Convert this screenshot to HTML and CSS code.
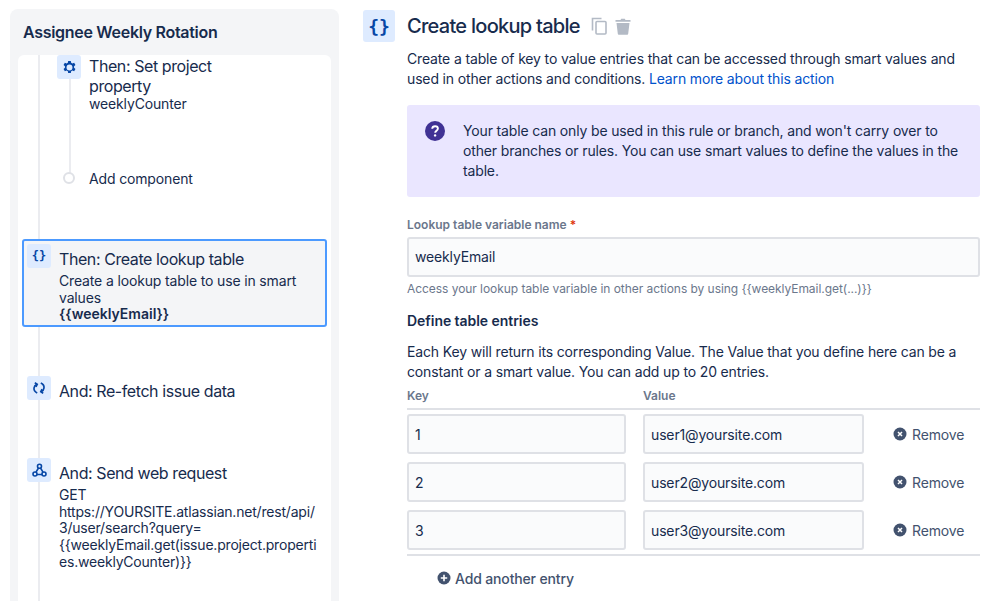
FILE: index.html
```html
<!DOCTYPE html>
<html lang="en">
<head>
<meta charset="utf-8">
<title>Create lookup table</title>
<link rel="stylesheet" href="styles.css">
</head>
<body>
<div class="page">
  <aside class="side">
    <h2 class="rule-name">Assignee Weekly Rotation</h2>
    <div class="chain">
      <div class="trunk"></div>
      <div class="branch">
        <div class="branch-line"></div>
        <div class="step step-branch">
          <span class="tile"><svg width="13" height="13" viewBox="0 0 14 14"><path fill="#0747a6" fill-rule="evenodd" d="M5.6 0h2.8l.4 2 1.3.7 1.9-.7 1.4 2.4-1.5 1.3v1.6l1.500 1.300-1.400 2.400-1.900-.7-1.300.7-.4 2H5.600l-.4-2-1.300-.7-1.900.7L.6 8.600l1.500-1.300V5.700L.6 4.400 2 2l1.900.7L5.200 2zM7 3.800a3.200 3.200 0 1 0 0 6.400 3.200 3.200 0 0 0 0-6.400z"/></svg></span>
          <div class="step-text narrow">
            <div class="step-title">Then: Set project property</div>
            <div class="step-desc">weeklyCounter</div>
          </div>
        </div>
        <div class="step add-step">
          <span class="dot-wrap"><span class="dot"></span></span>
          <div class="add-label">Add component</div>
        </div>
      </div>
      <div class="step step-main selected">
        <span class="tile"><span class="braces">{}</span></span>
        <div class="step-text">
          <div class="step-title">Then: Create lookup table</div>
          <div class="step-desc">Create a lookup table to use in smart values<br><b>{{weeklyEmail}}</b></div>
        </div>
      </div>
      <div class="step step-main refetch">
        <span class="tile"><svg width="14" height="14" viewBox="0 0 14 14" fill="none" stroke="#0747a6" stroke-width="1.700"><path d="M5.200 12C3 11 1.800 9.300 2 7.200 2.200 5.400 3.200 4 4.800 3.400"/><path d="M8.800 2C11 3 12.200 4.700 12 6.800c-.2 1.800-1.200 3.200-2.800 3.800"/><path d="M2.800 1.800l2.400 1.500-1.300 2.500M11.200 12.200l-2.400-1.500 1.300-2.500"/></svg></span>
        <div class="step-text"><div class="step-title">And: Re-fetch issue data</div></div>
      </div>
      <div class="step step-main web">
        <span class="tile"><svg width="15" height="15" viewBox="0 0 15 15" fill="none" stroke="#0747a6" stroke-width="1.600"><circle cx="7.500" cy="3.200" r="2"/><circle cx="3" cy="11" r="2"/><circle cx="12" cy="11" r="2"/><path d="M6.500 5l-2.500 4.200M8.500 5l2.500 4.200M5 11.500h5"/></svg></span>
        <div class="step-text">
          <div class="step-title">And: Send web request</div>
          <div class="step-desc url">GET<br>https://YOURSITE.atlassian.net/rest/api/<br>3/user/search?query=<br>{{weeklyEmail.get(issue.project.properti<br>es.weeklyCounter)}}</div>
        </div>
      </div>
    </div>
  </aside>
  <main class="main">
    <header class="head">
      <span class="head-tile">{}</span>
      <h1 class="title">Create lookup table</h1>
      <svg class="head-icon" width="17" height="18" viewBox="0 0 17 18" fill="none" stroke="#b3bac5" stroke-width="1.600"><path d="M1.500 13.500V1.500h9"/><rect x="5" y="4.500" width="10" height="12.500" rx="1"/></svg>
      <svg class="head-icon" width="16" height="18" viewBox="0 0 16 18"><path fill="#b3bac5" d="M.500 3h5l.7-1.200h3.600l.7 1.200h5v1.800H.500zM1.500 6h13l-1.300 10.800a1 1 0 0 1-1 .9H3.800a1 1 0 0 1-1-.9z"/></svg>
    </header>
    <div class="content">
      <p class="intro">Create a table of key to value entries that can be accessed through smart values and used in other actions and conditions. <a href="#">Learn more about this action</a></p>
      <div class="notice">
        <svg class="notice-icon" width="20" height="20" viewBox="0 0 20 20"><circle cx="10" cy="10" r="10" fill="#403294"/><path d="M7.200 7.800C7.300 6.200 8.500 5.200 10.100 5.200c1.600 0 2.800 1 2.800 2.400 0 2.200-2.700 2.200-2.700 4.200" fill="none" stroke="#fff" stroke-width="1.900"/><circle cx="10.100" cy="14.400" r="1.200" fill="#fff"/></svg>
        <p>Your table can only be used in this rule or branch, and won't carry over to other branches or rules. You can use smart values to define the values in the table.</p>
      </div>
      <label class="field-label var-label">Lookup table variable name<span class="req">*</span></label>
      <div class="input var-input">weeklyEmail</div>
      <p class="help">Access your lookup table variable in other actions by using {{weeklyEmail.get(...)}}</p>
      <h3 class="section">Define table entries</h3>
      <p class="section-text">Each Key will return its corresponding Value. The Value that you define here can be a constant or a smart value. You can add up to 20 entries.</p>
      <div class="table">
        <div class="row header-row">
          <span class="field-label c-key">Key</span>
          <span class="field-label c-val">Value</span>
        </div>
        <div class="rows">
          <div class="row">
            <div class="input c-key">1</div>
            <div class="input c-val">user1@yoursite.com</div>
            <span class="remove"><svg width="14" height="14" viewBox="0 0 14 14"><circle cx="7" cy="7" r="6.500" fill="#42526e"/><path d="M5 5l4 4M9 5l-4 4" stroke="#fff" stroke-width="1.500"/></svg>Remove</span>
          </div>
          <div class="row">
            <div class="input c-key">2</div>
            <div class="input c-val">user2@yoursite.com</div>
            <span class="remove"><svg width="14" height="14" viewBox="0 0 14 14"><circle cx="7" cy="7" r="6.500" fill="#42526e"/><path d="M5 5l4 4M9 5l-4 4" stroke="#fff" stroke-width="1.500"/></svg>Remove</span>
          </div>
          <div class="row">
            <div class="input c-key">3</div>
            <div class="input c-val">user3@yoursite.com</div>
            <span class="remove"><svg width="14" height="14" viewBox="0 0 14 14"><circle cx="7" cy="7" r="6.500" fill="#42526e"/><path d="M5 5l4 4M9 5l-4 4" stroke="#fff" stroke-width="1.500"/></svg>Remove</span>
          </div>
        </div>
      </div>
      <div class="add-entry"><svg width="14" height="14" viewBox="0 0 14 14"><circle cx="7" cy="7" r="6.500" fill="#42526e"/><path d="M7 3.800v6.400M3.800 7h6.400" stroke="#fff" stroke-width="1.600"/></svg>Add another entry</div>
    </div>
  </main>
</div>
</body>
</html>
```
FILE: styles.css
```css
* { box-sizing: border-box; }
html, body { margin: 0; height: 100%; overflow: hidden; background: #fff; }
body { font-family: Inter, "Liberation Sans", sans-serif; color: #172b4d; font-size: 14px; line-height: 17px; letter-spacing: -0.15px; }
p, h1, h2, h3 { margin: 0; }

.page { display: flex; height: 601px; overflow: hidden; }

.side { width: 329px; margin: 9px 0 0 10px; background: #f4f5f7; border-radius: 8px 8px 0 0; padding: 0 8px; display: flex; flex-direction: column; flex: none; }
.rule-name { font-size: 16px; line-height: 20px; font-weight: 600; color: #172b4d; padding: 13px 0 13px 5px; letter-spacing: -0.3px; }
.chain { position: relative; flex: 1; background: #fff; border-radius: 6px 6px 0 0; padding: 0 4px; overflow: hidden; }
.trunk { position: absolute; left: 19.500px; top: 0; bottom: 0; width: 2px; background: #ebecf0; }

.step { display: flex; position: relative; }
.tile { flex: none; width: 24px; height: 24px; border-radius: 3px; background: #deebff; display: flex; align-items: center; justify-content: center; }
.braces { font-family: "DejaVu Sans Mono", monospace; font-size: 12px; font-weight: 700; color: #0747a6; letter-spacing: 0; line-height: 1; }
.step-title { font-size: 16px; line-height: 20px; color: #172b4d; letter-spacing: -0.42px; }
.step-desc { font-size: 14px; line-height: 16.500px; margin-top: 2px; color: #172b4d; }
.step-desc b { font-weight: 600; letter-spacing: 0; }
.step-text { margin-left: 8px; min-width: 0; flex: 1; }
.narrow { max-width: 150px; }

.branch { position: relative; padding-left: 35px; height: 172px; }
.branch-line { position: absolute; left: 46.500px; top: 20px; height: 98px; width: 2px; background: #ebecf0; }
.step-branch { height: 108px; }
.step-branch .step-text { padding-top: 1px; }
.step-branch .step-desc { margin-top: 0; }
.add-step { align-items: center; height: 30px; }
.dot-wrap { width: 24px; display: flex; justify-content: center; }
.dot { width: 12px; height: 12px; border-radius: 50%; border: 2px solid #dfe1e6; background: #fff; }
.add-label { margin-left: 8px; font-size: 14px; }

.step-main { padding: 5px 4px 0 5px; margin-top: 0; }
.selected { width: 305px; height: 88px; margin-top: 12px; border: 2px solid #4c9aff; border-radius: 3px; background: #f4f5f7; padding: 3px 4px 0 3px; z-index: 1; }
.selected .step-title { margin-top: 5px; }
.selected .step-desc { margin-top: 4px; }
.refetch { margin-top: 44px; height: 30px; }
.refetch .step-text { padding-top: 5px; }
.web { margin-top: 52px; }
.web .step-text { padding-top: 5px; }
.web .step-desc { margin-top: 4px; line-height: 16.700px; letter-spacing: -0.2px; white-space: nowrap; }

.main { flex: 1; min-width: 0; padding: 10px 18px 0 24px; }
.head { display: flex; align-items: center; height: 32px; }
.head-tile { width: 32px; height: 32px; border-radius: 3px; background: #deebff; color: #0747a6; font-family: "DejaVu Sans Mono", monospace; font-weight: 700; font-size: 18px; letter-spacing: 0; display: flex; align-items: center; justify-content: center; margin-right: 12px; }
.title { font-size: 20px; line-height: 24px; font-weight: 500; color: #172b4d; margin-right: 11px; letter-spacing: -0.72px; }
.head-icon { margin-right: 7px; }
.content { padding-left: 44px; }
.intro { margin-top: 7px; font-size: 14px; line-height: 20px; }
.intro a { color: #0052cc; text-decoration: none; }
.notice { margin-top: 16px; background: #eae6ff; border-radius: 3px; height: 92px; padding: 16px 16px 0 18px; display: flex; gap: 18px; }
.notice-icon { flex: none; }
.notice p { line-height: 20px; }
.field-label { font-size: 12px; line-height: 16px; font-weight: 600; color: #6b778c; letter-spacing: 0; }
.var-label { display: block; margin-top: 20px; }
.req { color: #de350b; margin-left: 3px; }
.input { background: #fafbfc; border: 2px solid #dfe1e6; border-radius: 3px; height: 40px; display: flex; align-items: center; padding: 0 6px; font-size: 14px; color: #172b4d; }
.var-input { margin-top: 4px; padding-bottom: 2px; }
.help { margin-top: 4px; font-size: 12px; line-height: 16px; color: #6b778c; letter-spacing: -0.05px; }
.section { margin-top: 15px; font-size: 14px; line-height: 18px; font-weight: 600; letter-spacing: -0.05px; }
.section-text { margin-top: 12px; line-height: 20px; }

.table { margin-top: 6px; }
.rows { border-top: 2px solid #dfe1e6; border-bottom: 2px solid #dfe1e6; padding: 4px 0 4px; display: flex; flex-direction: column; gap: 8px; }
.row { display: flex; align-items: center; }
.header-row { height: 20px; align-items: flex-start; }
.c-key { width: 219px; flex: none; }
.c-val { width: 221px; flex: none; margin-left: 17px; }
.remove { margin-left: 29px; display: flex; align-items: center; gap: 5px; color: #42526e; font-size: 14px; }
.add-entry { margin: 12px 0 0 30px; display: flex; align-items: center; gap: 4px; color: #42526e; font-size: 14px; height: 20px; font-weight: 500; letter-spacing: -0.15px; }
```
